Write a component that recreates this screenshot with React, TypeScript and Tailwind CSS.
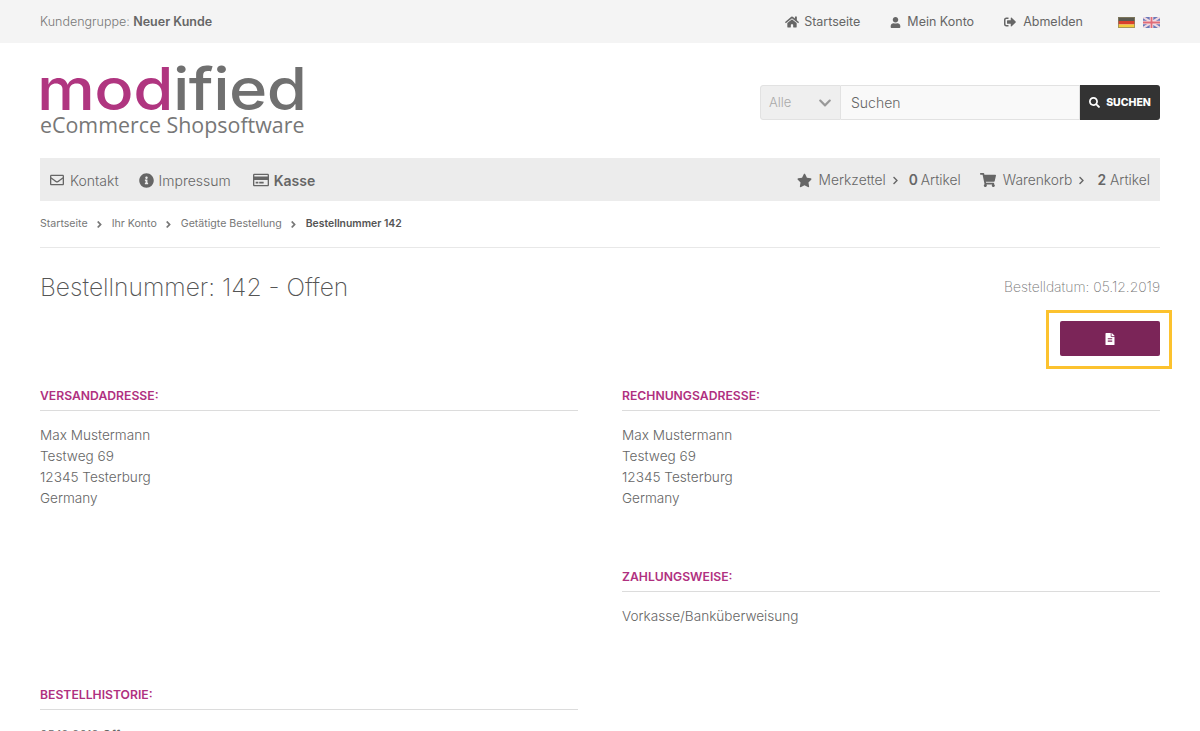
import { FaHome, FaUser, FaSignOutAlt, FaRegEnvelope, FaInfoCircle, FaRegCreditCard, FaStar, FaShoppingCart, FaSearch, FaFileAlt, FaChevronRight, FaChevronDown, FaAngleRight } from "react-icons/fa";

const font = { fontFamily: "Inter, 'Open Sans', sans-serif" };

function Address() {
  return (
    <p className="text-[13.6px] leading-[21px] text-[#666] font-light">
      Max Mustermann
      <br />
      Testweg 69
      <br />
      12345 Testerburg
      <br />
      Germany
    </p>
  );
}

function SectionTitle({ children }: { children: string }) {
  return (
    <h2 className="h-[32px] border-b border-[#dcdcdc] pt-[7px] text-[12.2px] font-semibold leading-[20px] text-[#b03080]">
      {children}
    </h2>
  );
}

function FlagDe() {
  return (
    <svg width="17" height="11" viewBox="0 0 17 11">
      <rect width="17" height="4" fill="#5a5a50" />
      <rect y="4" width="17" height="3.5" fill="#d8402c" />
      <rect y="7.5" width="17" height="3.5" fill="#f2cc3c" />
      <rect x="0.5" y="0.5" width="16" height="10" fill="none" stroke="#8a8060" strokeOpacity="0.7" />
    </svg>
  );
}

function FlagUk() {
  return (
    <svg width="17" height="11" viewBox="0 0 17 11">
      <rect width="17" height="11" fill="#6a78b8" />
      <path d="M0 0L17 11M17 0L0 11" stroke="#f0d8e0" strokeWidth="2.2" />
      <path d="M8.5 0V11M0 5.5H17" stroke="#f4e4e8" strokeWidth="3.6" />
      <path d="M8.5 0V11M0 5.5H17" stroke="#e06c78" strokeWidth="1.8" />
    </svg>
  );
}

export default function App() {
  return (
    <div style={font} className="relative h-[731px] w-[1200px] overflow-hidden bg-white text-[#666]">
      <div className="flex h-[43px] items-center bg-[#f4f4f4] px-10 pt-px text-[12.5px]">
        <span className="font-light text-[#777]">
          Kundengruppe: <b className="font-semibold text-[#666]">Neuer Kunde</b>
        </span>
        <div className="ml-auto flex items-center gap-[30px]">
          <a className="flex items-center gap-[5px]"><FaHome className="text-[14px]" />Startseite</a>
          <a className="flex items-center gap-[6px]"><FaUser className="text-[11px]" />Mein Konto</a>
          <a className="flex items-center gap-[7px]"><FaSignOutAlt className="text-[12px]" />Abmelden</a>
          <div className="ml-[5px] flex items-center gap-[8px]">
            <FlagDe />
            <FlagUk />
          </div>
        </div>
      </div>

      <div className="flex h-[115px] items-start justify-between px-10">
        <div className="mt-[21px] w-[265px]">
          <div className="-ml-[3px] h-[50px] origin-left scale-x-[1.105] whitespace-nowrap text-[59px] font-medium leading-[50px] tracking-[-0.5px]">
            <span className="text-[#b03580]">mod</span>
            <span className="text-[#707070]">ified</span>
          </div>
          <div style={{ fontFamily: "'Open Sans', sans-serif" }} className="whitespace-nowrap text-[21.4px] leading-[22px] text-[#777]">
            eCommerce Shopsoftware
          </div>
        </div>
        <div className="mt-[42px] flex h-[35px] w-[400px] text-[13px]">
          <div className="flex w-[81px] items-center justify-between rounded-l-[3px] border border-[#e2e2e2] bg-[#efefef] pl-2 pr-2 pt-px font-light text-[#aaa]">
            Alle
            <FaChevronDown className="text-[14px] text-[#999]" />
          </div>
          <div className="flex flex-1 items-center border-y border-r border-[#e2e2e2] bg-[#f9f9f9] pl-[10px] text-[14px] font-light text-[#666]">
            Suchen
          </div>
          <button className="flex w-[80px] items-center justify-center gap-[6px] rounded-r-[3px] bg-[#333] text-[10.5px] font-extrabold text-white">
            <FaSearch className="text-[11px]" />
            SUCHEN
          </button>
        </div>
      </div>

      <div className="mx-10 flex h-[43px] items-center bg-[#ececec] px-[10px] pt-px text-[14px] font-light">
        <a className="flex items-center gap-[6px]"><FaRegEnvelope className="text-[14px]" />Kontakt</a>
        <a className="ml-5 flex items-center gap-[5px]"><FaInfoCircle className="text-[15px]" />Impressum</a>
        <a className="ml-[22px] flex items-center gap-[5px] font-semibold"><FaRegCreditCard className="text-[16px]" />Kasse</a>
        <div className="ml-auto flex items-center text-[13.8px]">
          <FaStar className="mr-[7px] text-[15px]" />
          Merkzettel
          <FaChevronRight className="ml-[5px] mr-[9px] text-[9px]" />
          <b className="mr-[3px] font-semibold">0</b>
          Artikel
          <FaShoppingCart className="ml-[19px] mr-[7px] text-[16px]" />
          Warenkorb
          <FaChevronRight className="ml-[5px] mr-[11px] text-[9px]" />
          <b className="mr-1 font-semibold">2</b>
          Artikel
        </div>
      </div>

      <div className="mx-10 flex h-[47px] items-center gap-[6.5px] border-b border-[#e8e8e8] text-[10.6px] text-[#777]">
        <span>Startseite</span>
        <FaAngleRight className="text-[11px]" />
        <span>Ihr Konto</span>
        <FaAngleRight className="text-[11px]" />
        <span>Getätigte Bestellung</span>
        <FaAngleRight className="text-[11px]" />
        <b className="text-[10.4px] font-semibold text-[#555]">Bestellnummer 142</b>
      </div>

      <div className="mx-10 flex h-[73px] items-center justify-between pt-[6px]">
        <h1 className="text-[24.6px] font-extralight text-[#555]">Bestellnummer: 142 - Offen</h1>
        <span className="text-[13.9px] font-extralight text-[#777]">Bestelldatum: 05.12.2019</span>
      </div>

      <div className="mx-10 flex justify-end">
        <div className="relative">
          <button className="flex h-[35px] w-[100px] items-center justify-center rounded-[2px] bg-[#7b2558] text-[12px] text-white">
            <FaFileAlt />
          </button>
          <div className="absolute -bottom-[13px] -left-[14px] -right-[12px] -top-[11px] border-[3px] border-[#fcc22e]" />
        </div>
      </div>

      <div className="mx-10 mt-[23px] grid grid-cols-[538px_538px] justify-between">
        <section>
          <SectionTitle>VERSANDADRESSE:</SectionTitle>
          <div className="mt-[14px]"><Address /></div>
        </section>
        <section>
          <SectionTitle>RECHNUNGSADRESSE:</SectionTitle>
          <div className="mt-[14px]"><Address /></div>
          <div className="mt-[51px]">
            <SectionTitle>ZAHLUNGSWEISE:</SectionTitle>
            <p className="mt-[14px] text-[13.6px] font-light leading-[21px]">Vorkasse/Banküberweisung</p>
          </div>
        </section>
      </div>

      <section className="mx-10 mt-[51px] w-[538px]">
        <SectionTitle>BESTELLHISTORIE:</SectionTitle>
        <p className="mt-[14px] text-[12px] font-light leading-[21px]">
          05.12.2019 <b className="font-semibold">Offen</b>
        </p>
      </section>
    </div>
  );
}
